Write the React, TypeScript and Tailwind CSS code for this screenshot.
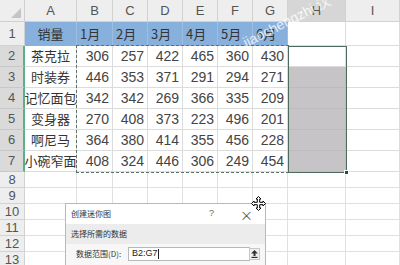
import React from "react";

const rows: [string, number[]][] = [
  ["茶克拉", [306, 257, 422, 465, 360, 430]],
  ["时装券", [446, 353, 371, 291, 294, 271]],
  ["记忆面包", [342, 342, 269, 366, 335, 209]],
  ["变身器", [270, 408, 373, 223, 496, 201]],
  ["啊尼马", [364, 380, 414, 355, 456, 228]],
  ["小碗窄面", [408, 324, 446, 306, 249, 454]],
];

const cols = ["A", "B", "C", "D", "E", "F", "G", "H", "I"];
const months = ["1月", "2月", "3月", "4月", "5月", "6月"];

const cjk = "font-['Noto_Sans_CJK_SC',sans-serif]";
const num = "font-['Liberation_Sans',Arial,sans-serif]";

export default function App() {
  return (
    <div className="relative w-[400px] h-[265px] overflow-hidden bg-white">
      <div className="grid grid-cols-[25px_52px_36px_35px_35px_35px_35px_35px_58px_54px] grid-rows-[22px_24px_repeat(6,21px)_repeat(6,16px)]">
        {/* header row */}
        <div className="relative bg-[#eeeeee] border-r border-b border-[#cfcfcf]">
          <svg className="absolute right-[3px] bottom-[3px]" width="10" height="10" viewBox="0 0 10 10">
            <polygon points="10,0 10,10 0,10" fill="#c4c4c4" />
          </svg>
        </div>
        {cols.map((c) => (
          <div
            key={c}
            className={`flex items-center justify-center border-r border-b border-[#d2d2d2] text-[13px] text-[#555] ${num} ${c === "H" ? "bg-[#d6d6d6]" : "bg-[#eeeeee]"}`}
          >
            {c}
          </div>
        ))}

        {/* row 1 */}
        <div className={`flex items-center justify-center bg-[#eeeeee] border-r border-b border-[#d2d2d2] text-[13px] text-[#555] ${num}`}>1</div>
        <div className={`flex items-center justify-center bg-[#87b0dc] border-r border-[#9dbde2] text-[13px] text-[#333] ${cjk}`}>销量</div>
        {months.map((m) => (
          <div key={m} className={`flex items-center pl-[3px] bg-[#87b0dc] border-r border-[#9dbde2] text-[13px] text-[#333] ${cjk}`}>
            {m}
          </div>
        ))}
        <div className="bg-white border-r border-b border-[#dcdcdc]" />
        <div className="bg-white border-r border-b border-[#dcdcdc]" />

        {/* data rows */}
        {rows.map(([name, vals], i) => (
          <React.Fragment key={name}>
            <div className={`flex items-center justify-center bg-[#dadada] border-r-2 border-r-[#5bb088] border-b border-b-[#c8c8c8] text-[13px] text-[#555] ${num}`}>
              {i + 2}
            </div>
            <div className={`flex items-center justify-center whitespace-nowrap border-r border-b border-[#dcdcdc] text-[13px] text-[#333] ${cjk}`}>
              {name}
            </div>
            {vals.map((v, j) => (
              <div key={j} className={`flex items-center justify-end pr-[3px] border-r border-b border-[#dcdcdc] text-[14px] text-[#444] ${num}`}>
                {v}
              </div>
            ))}
            <div className={`border-r border-b ${i === 0 ? "bg-white border-[#dcdcdc]" : "bg-[#c6c4c6] border-[#bdbbbd]"}`} />
            <div className="border-r border-b border-[#dcdcdc]" />
          </React.Fragment>
        ))}

        {/* empty rows */}
        {[8, 9, 10, 11, 12, 13].map((r) => (
          <React.Fragment key={r}>
            <div className={`flex items-center justify-center bg-[#eeeeee] border-r border-b border-[#d2d2d2] text-[13px] text-[#555] ${num}`}>{r}</div>
            {cols.map((c) => (
              <div key={c} className="border-r border-b border-[#e0e0e0]" />
            ))}
          </React.Fragment>
        ))}
      </div>

      {/* dashed range B2:G7 */}
      <div className="absolute left-[76px] top-[45px] w-[213px] h-[128px] border-[1.5px] border-dashed border-[#5d7268]" />
      {/* selection H2:H7 */}
      <div className="absolute left-[288px] top-[46px] w-[59px] h-[127px] border border-[#4f6b5d]" />
      <div className="absolute left-[344px] top-[170px] w-[5px] h-[5px] bg-[#2f4a3c] border border-white" />

      {/* watermark */}
      <div className={`absolute left-[244px] top-[36px] -rotate-[27deg] origin-left text-[14px] leading-none text-white/80 ${num}`}>
        jiaochengzhi 汉
      </div>

      {/* dialog */}
      <div className={`absolute left-[65px] top-[203px] w-[201px] h-[70px] bg-[#f7f7f7] border border-[#dba9a9] ${cjk}`}>
        <div className="flex items-center h-[20px] bg-white pl-[5px] text-[8px] text-[#333]">
          <span>创建迷你图</span>
          <span className={`ml-auto mr-[26px] text-[9px] text-[#666] ${num}`}>?</span>
          <span className="mr-[12px] text-[13px] leading-none text-[#555]">×</span>
        </div>
        <div className="flex items-center h-[20px] bg-[#ececec] pl-[5px] text-[8px] text-[#333]">选择所需的数据</div>
        <div className="flex items-center h-[20px] pl-[10px] text-[8px] text-[#333]">
          <span className="w-[52px]">数据范围(D):</span>
          <div className="flex items-center h-[14px] w-[122px] bg-white border border-[#b8b8b8] pl-[3px]">
            <span className={`text-[9px] text-[#222] ${num}`}>B2:G7</span>
            <span className="w-px h-[10px] bg-[#222]" />
          </div>
          <div className="flex items-center justify-center w-[11px] h-[12px] border border-[#c8c8c8] bg-[#f0f0f0] ml-[-1px]">
            <svg width="7" height="8" viewBox="0 0 7 8">
              <path d="M3.5 0 L7 3.5 H4.5 V6 H2.5 V3.5 H0 Z" fill="#333" />
              <rect x="0.5" y="6.8" width="6" height="1.2" fill="#333" />
            </svg>
          </div>
        </div>
      </div>

      {/* move cursor */}
      <svg className="absolute left-[251px] top-[196px]" width="15" height="15" viewBox="0 0 15 15">
        <path
          d="M7.5 0.5 L10 3 H8.7 V6.3 H12 V5 L14.5 7.5 L12 10 V8.7 H8.7 V12 H10 L7.5 14.5 L5 12 H6.3 V8.7 H3 V10 L0.5 7.5 L3 5 V6.3 H6.3 V3 H5 Z"
          fill="white"
          stroke="black"
          strokeWidth="1"
          strokeLinejoin="round"
        />
      </svg>
    </div>
  );
}
